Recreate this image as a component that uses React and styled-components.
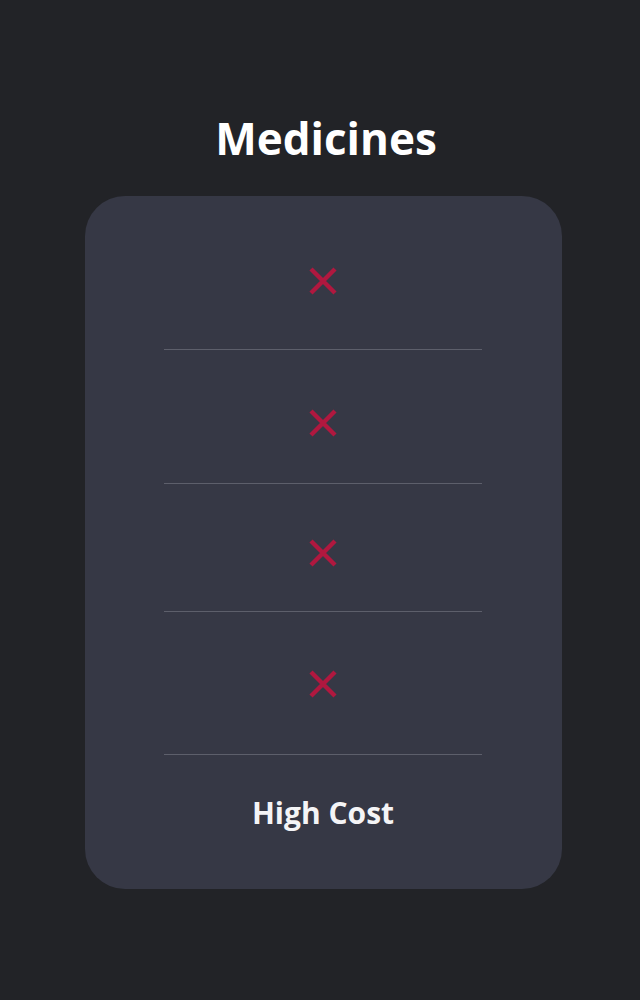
import React from "react";
import styled, { createGlobalStyle } from "styled-components";

const GlobalStyle = createGlobalStyle`
  body {
    margin: 0;
    background: #222327;
    font-family: "Open Sans", "Noto Sans", sans-serif;
  }
`;

const rows = [
  { top: 70, bottom: 53 },
  { top: 58, bottom: 45 },
  { top: 54, bottom: 43 },
  { top: 57, bottom: 55 }
];

function CrossIcon() {
  return (
    <svg width="30" height="30" viewBox="0 0 30 30">
      <path
        d="M3 3 L27 27 M27 3 L3 27"
        stroke="#b0183f"
        strokeWidth="4.4"
        fill="none"
      />
    </svg>
  );
}

export default function App() {
  return (
    <>
      <GlobalStyle />
      <Page>
        <Title>Medicines</Title>
        <Card>
          {rows.map((r, i) => (
            <Row key={i} top={r.top} bottom={r.bottom}>
              <CrossIcon />
            </Row>
          ))}
          <Footer>High Cost</Footer>
        </Card>
      </Page>
    </>
  );
}

const Page = styled.div`
  min-height: 1000px;
  display: flex;
  flex-direction: column;
  align-items: center;
  padding-top: 108px;
  box-sizing: border-box;
`;

const Title = styled.h1`
  margin: 0;
  font-size: 44px;
  line-height: 60px;
  font-weight: 700;
  color: #ffffff;
  margin-left: 12px;
`;

const Card = styled.div`
  margin-top: 28px;
  width: 477px;
  height: 693px;
  margin-left: 6px;
  background: #363845;
  border-radius: 40px;
  display: flex;
  flex-direction: column;
  align-items: center;
  box-sizing: border-box;
`;

const Row = styled.div`
  width: 318px;
  display: flex;
  justify-content: center;
  padding-top: ${({ top }) => top}px;
  padding-bottom: ${({ bottom }) => bottom}px;
  border-bottom: 1px solid #5d5f6b;
  line-height: 0;
`;

const Footer = styled.div`
  margin-top: 38px;
  font-size: 30px;
  line-height: 40px;
  font-weight: 700;
  color: #f4f4f6;
`;
